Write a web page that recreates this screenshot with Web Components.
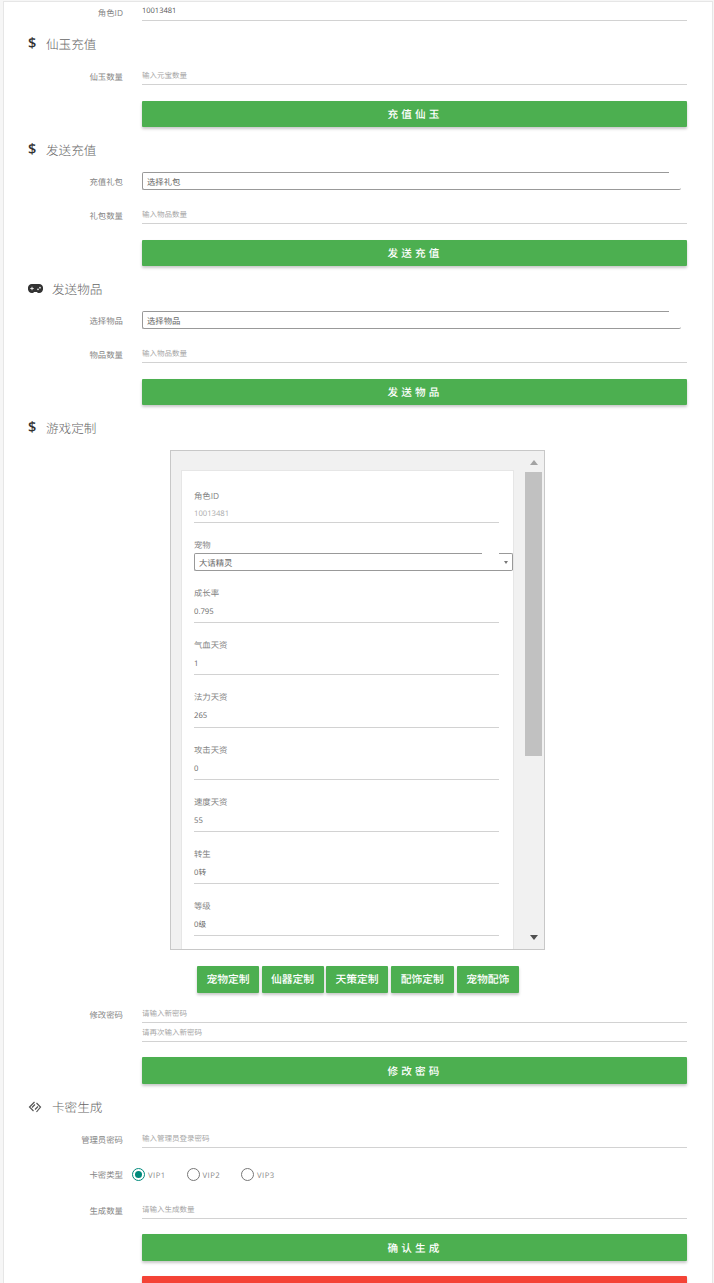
<!DOCTYPE html>
<html lang="zh-CN">
<head>
<meta charset="utf-8">
<title>GM</title>
<style>
  html, body { margin: 0; height: 100%; overflow: hidden; }
  body { background: #f6f6f6; font-family: "Open Sans", "Noto Sans CJK SC", sans-serif; text-rendering: geometricPrecision; }
  x-heading + x-field { margin-top: 10px; }
  x-field.tight { margin-top: 0; }
  x-field.btn { margin-top: 16px; }
  x-field.btn-15 { margin-top: 15px; }
  x-field.first { margin-top: 0; }
  .dollar { width: 18px; font: 600 14.5px "Open Sans", sans-serif; color: #333; }
  .glyph { width: 24px; display: flex; align-items: center; }
</style>
</head>
<body>
<template id="page-tpl">
  <style>
    :host { display: block; margin: 1px 1px 0 3px; height: 1400px; box-sizing: border-box;
      background: #fff; border: 1px solid #e6e6e6; padding: 0 25px 0 0; }
  </style>
  <slot></slot>
</template>

<x-page>
  <x-field class="first" label="角色ID"><x-input value="10013481"></x-input></x-field>

  <x-heading title-text="仙玉充值"><span slot="icon" class="dollar">$</span></x-heading>
  <x-field label="仙玉数量"><x-input placeholder="输入元宝数量"></x-input></x-field>
  <x-field class="btn"><x-btn>充值仙玉</x-btn></x-field>

  <x-heading title-text="发送充值"><span slot="icon" class="dollar">$</span></x-heading>
  <x-field label="充值礼包"><x-select top="526" width="539">选择礼包</x-select></x-field>
  <x-field label="礼包数量"><x-input placeholder="输入物品数量"></x-input></x-field>
  <x-field class="btn"><x-btn>发送充值</x-btn></x-field>

  <x-heading title-text="发送物品">
    <span slot="icon" class="glyph">
      <svg width="15" height="9" viewBox="0 0 15 9"><path fill="#333" d="M4 0h7a4 4 0 0 1 4 4.500A4 4 0 0 1 11 9c-1 0-1.600-.4-2.100-1H6.100C5.600 8.600 5 9 4 9A4 4 0 0 1 0 4.500 4 4 0 0 1 4 0z"/><path stroke="#e8e8e8" stroke-width="1" d="M2.300 4.500h3.400M4 2.800v3.400"/><circle cx="10" cy="5.300" r=".9" fill="#e8e8e8"/><circle cx="12" cy="3.700" r=".9" fill="#e8e8e8"/></svg>
    </span>
  </x-heading>
  <x-field label="选择物品"><x-select top="526" width="539">选择物品</x-select></x-field>
  <x-field label="物品数量"><x-input placeholder="输入物品数量"></x-input></x-field>
  <x-field class="btn"><x-btn>发送物品</x-btn></x-field>

  <x-heading title-text="游戏定制"><span slot="icon" class="dollar">$</span></x-heading>
  <x-scroll-panel>
    <x-stat label="角色ID" value="10013481" short></x-stat>
    <x-stat label="宠物"><x-select top="287" arrow>大话精灵</x-select></x-stat>
    <x-stat label="成长率" value="0.795"></x-stat>
    <x-stat label="气血天资" value="1"></x-stat>
    <x-stat label="法力天资" value="265"></x-stat>
    <x-stat label="攻击天资" value="0"></x-stat>
    <x-stat label="速度天资" value="55"></x-stat>
    <x-stat label="转生" value="0转"></x-stat>
    <x-stat label="等级" value="0级"></x-stat>
  </x-scroll-panel>
  <x-tabs>
    <x-tab w="62">宠物定制</x-tab>
    <x-tab w="62">仙器定制</x-tab>
    <x-tab w="62">天策定制</x-tab>
    <x-tab w="63.500">配饰定制</x-tab>
    <x-tab w="62.500">宠物配饰</x-tab>
  </x-tabs>

  <x-field label="修改密码" style="margin-top:11px"><x-input placeholder="请输入新密码"></x-input></x-field>
  <x-field class="tight"><x-input placeholder="请再次输入新密码"></x-input></x-field>
  <x-field class="btn-15"><x-btn tall>修改密码</x-btn></x-field>

  <x-heading title-text="卡密生成">
    <span slot="icon" class="glyph">
      <svg width="14" height="12" viewBox="0 0 14 12" fill="none" stroke="#555" stroke-width="1.200"><path d="M6.500 1 1.500 6l4 4M4 6.500l3-3M8.500 11l4-5-4-4M10 5.500l-3 3"/></svg>
    </span>
  </x-heading>
  <x-field label="管理员密码"><x-input placeholder="输入管理员登录密码"></x-input></x-field>
  <x-field label="卡密类型" style="margin-top:16px">
    <x-radios></x-radios>
  </x-field>
  <x-field label="生成数量" style="margin-top:16px"><x-input placeholder="请输入生成数量"></x-input></x-field>
  <x-field class="btn-15"><x-btn tall>确认生成</x-btn></x-field>
  <x-field class="btn-15"><x-btn tall danger></x-btn></x-field>
</x-page>

<script>
  class XPage extends HTMLElement {
    constructor() {
      super();
      this.attachShadow({ mode: 'open' });
      this.shadowRoot.appendChild(document.getElementById('page-tpl').content.cloneNode(true));
    }
  }

  class XHeading extends HTMLElement {
    constructor() {
      super();
      this.attachShadow({ mode: 'open' });
      this.shadowRoot.innerHTML = `
        <style>
          :host { display: flex; align-items: center; height: 24px; margin: 11px 0 0 24px; }
          .t { font-size: 12.6px; font-weight: 300; color: #666; padding-bottom: 1px; }
          ::slotted(*) { margin-bottom: 1px; }
        </style>
        <slot name="icon"></slot>
        <span class="t">${this.getAttribute('title-text') || ''}</span>
      `;
    }
  }

  // label column + whatever goes in the right side
  class XField extends HTMLElement {
    constructor() {
      super();
      this.attachShadow({ mode: 'open' });
      this.shadowRoot.innerHTML = `
        <style>
          :host { display: flex; align-items: center; margin-top: 15px; }
          .l { width: 119px; flex: none; margin-right: 19px; padding-top: 2px; text-align: right; font-size: 8.4px; color: #858585; }
          .r { flex: 1; min-width: 0; }
        </style>
        <div class="l">${this.getAttribute('label') || ''}</div>
        <div class="r"><slot></slot></div>
      `;
    }
  }

  class XInput extends HTMLElement {
    constructor() {
      super();
      this.attachShadow({ mode: 'open' });
      const value = this.getAttribute('value');
      const text = value || this.getAttribute('placeholder') || '';
      this.shadowRoot.innerHTML = `
        <style>
          :host { display: block; height: 19px; box-sizing: border-box; border-bottom: 1px solid #d2d2d2;
            font-size: 7.5px; line-height: ${value ? 18 : 20}px; color: ${value ? '#555' : '#a5a5a5'}; }
        </style>
        ${text}
      `;
    }
  }

  class XSelect extends HTMLElement {
    constructor() {
      super();
      this.attachShadow({ mode: 'open' });
      const top = this.getAttribute('top');
      const width = this.getAttribute('width');
      const arrow = this.hasAttribute('arrow');
      this.shadowRoot.innerHTML = `
        <style>
          :host { display: flex; height: 18px; box-sizing: border-box; ${width ? `width: ${width}px;` : ''}
            border-left: 1px solid #999; border-bottom: 1px solid #999; border-radius: 2px;
            background: linear-gradient(#999, #999) 0 0 / ${top}px 1px no-repeat; }
          .v { flex: 1; padding-left: 4px; font-size: 8.4px; line-height: 21px; color: #666; }
          .a { width: 14px; box-sizing: border-box; border-top: 1px solid #999; border-right: 1px solid #999;
            border-radius: 0 2px 0 0; display: flex; align-items: center; justify-content: center; }
          .a i { border: 2px solid transparent; border-top: 3px solid #777; border-bottom: 0; margin-top: 1px; }
        </style>
        <div class="v"><slot></slot></div>
        ${arrow ? '<div class="a"><i></i></div>' : ''}
      `;
    }
  }

  class XBtn extends HTMLElement {
    constructor() {
      super();
      this.attachShadow({ mode: 'open' });
      const bg = this.hasAttribute('danger') ? '#f44336' : '#4caf50';
      const h = this.hasAttribute('tall') ? 27 : 26;
      this.shadowRoot.innerHTML = `
        <style>
          :host { display: flex; align-items: center; justify-content: center; height: ${h}px; box-sizing: border-box;
            padding: 1px 0 0 1px; background: ${bg}; border-radius: 1px; color: #fff; font-size: 10.600px; font-weight: 500;
            letter-spacing: 3.200px; box-shadow: 0 2px 3px rgba(0,0,0,.22); }
        </style>
        <slot></slot>
      `;
    }
  }

  class XScrollPanel extends HTMLElement {
    constructor() {
      super();
      this.attachShadow({ mode: 'open' });
      this.shadowRoot.innerHTML = `
        <style>
          :host { display: flex; box-sizing: border-box; width: 375px; height: 500px; margin: 10px 0 0 166px;
            background: #f1f1f1; border: 1px solid #c8c8c8; }
          .view { width: 354px; box-sizing: border-box; padding: 19px 11px 0 10px; overflow: hidden; }
          .card { background: #fff; border: 1px solid #e6e6e6; border-bottom: 0; padding: 3px 14px 0 12px; height: 600px; }
          .bar { flex: 1; display: flex; flex-direction: column; align-items: center; padding-right: 2px; }
          .up, .down { display: flex; align-items: center; justify-content: center; }
          .up { height: 21px; }
          .up i { border: 4.500px solid transparent; border-top: 0; border-bottom: 5px solid #a3a3a3; margin-top: 1px; }
          .thumb { width: 17px; height: 284px; background: #c1c1c1; flex: none; }
          .down { margin-top: auto; height: 24px; }
          .down i { border: 4.500px solid transparent; border-bottom: 0; border-top: 5px solid #505050; }
        </style>
        <div class="view"><div class="card"><slot></slot></div></div>
        <div class="bar">
          <div class="up"><i></i></div>
          <div class="thumb"></div>
          <div class="down"><i></i></div>
        </div>
      `;
    }
  }

  class XStat extends HTMLElement {
    constructor() {
      super();
      this.attachShadow({ mode: 'open' });
      const value = this.getAttribute('value');
      const short = this.hasAttribute('short');
      const h = short ? 21 : 24.200;
      const color = short ? '#aaa' : '#666';
      this.shadowRoot.innerHTML = `
        <style>
          :host { display: block; padding-top: 16px; }
          .l { height: 12px; font-size: 8.400px; line-height: 14px; color: #858585; }
          .v { height: ${h}px; box-sizing: border-box; border-bottom: 1px solid #d2d2d2;
            font-size: 7.700px; line-height: ${short ? h + 4 : h + 2}px; color: ${color}; }
          .s { margin: 2px -14px 0 0; }
        </style>
        <div class="l">${this.getAttribute('label')}</div>
        ${value !== null ? `<div class="v">${value}</div>` : '<div class="s"><slot></slot></div>'}
      `;
    }
  }

  class XTabs extends HTMLElement {
    constructor() {
      super();
      this.attachShadow({ mode: 'open' });
      this.shadowRoot.innerHTML = `
        <style>
          :host { display: flex; gap: 2.500px; margin: 16px 0 0 193px; }
        </style>
        <slot></slot>
      `;
    }
  }

  class XTab extends HTMLElement {
    constructor() {
      super();
      this.attachShadow({ mode: 'open' });
      this.shadowRoot.innerHTML = `
        <style>
          :host { display: flex; align-items: center; justify-content: center; flex: none; height: 27px;
            box-sizing: border-box; padding-bottom: 1px; width: ${this.getAttribute('w')}px; background: #4caf50;
            border-radius: 1px; color: #fff; font-size: 10.800px; font-weight: 500; box-shadow: 0 2px 3px rgba(0,0,0,.22); }
        </style>
        <slot></slot>
      `;
    }
  }

  class XRadios extends HTMLElement {
    constructor() {
      super();
      this.attachShadow({ mode: 'open' });
      this.shadowRoot.innerHTML = `
        <style>
          :host { display: flex; height: 20px; align-items: center; margin-left: -10px; font-size: 7.700px;
            letter-spacing: .5px; color: #888; }
          .o { width: 11px; height: 11px; border: 1px solid #777; border-radius: 50%; box-sizing: content-box;
            display: flex; align-items: center; justify-content: center; margin-right: 3px; flex: none; }
          .on { border-color: #00897b; }
          .on i { width: 7px; height: 7px; border-radius: 50%; background: #00897b; }
          .x { padding-top: 4px; }
          .w { width: 38.500px; }
        </style>
        <span class="o on"><i></i></span><span class="x w">VIP1</span>
        <span class="o"></span><span class="x w">VIP2</span>
        <span class="o"></span><span class="x">VIP3</span>
      `;
    }
  }

  customElements.define('x-page', XPage);
  customElements.define('x-heading', XHeading);
  customElements.define('x-field', XField);
  customElements.define('x-input', XInput);
  customElements.define('x-select', XSelect);
  customElements.define('x-btn', XBtn);
  customElements.define('x-scroll-panel', XScrollPanel);
  customElements.define('x-stat', XStat);
  customElements.define('x-tabs', XTabs);
  customElements.define('x-tab', XTab);
  customElements.define('x-radios', XRadios);
</script>
</body>
</html>
